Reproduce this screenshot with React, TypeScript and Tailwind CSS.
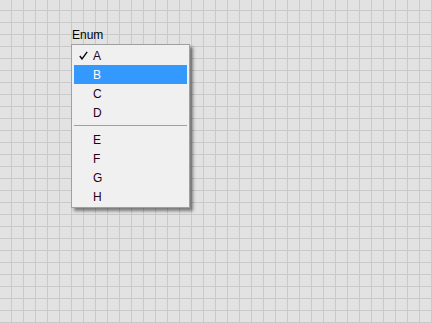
const items = ["A", "B", "C", "D", "E", "F", "G", "H"];

function Row({ label, checked, active }: { label: string; checked?: boolean; active?: boolean }) {
  return (
    <div className={`mx-[2px] flex h-[19px] items-center ${active ? "bg-[#3399ff] text-white" : "text-[#2a0012]"}`}>
      <span className="flex w-[19px] justify-end pr-[5px]">
        {checked && (
          <svg width="9" height="9" viewBox="0 0 9 9">
            <path d="M0.8 5 L3 8 L8.2 0.8" fill="none" stroke="#000" strokeWidth="1.3" />
          </svg>
        )}
      </span>
      <span>{label}</span>
    </div>
  );
}

export default function App() {
  return (
    <div
      className="h-[323px] w-[432px] overflow-hidden bg-[#e2e2e2] bg-[image:linear-gradient(to_right,#c9c9c9_1px,transparent_1px),linear-gradient(to_bottom,#c9c9c9_1px,transparent_1px)] bg-[size:12px_12px] bg-[position:11px_10px] pl-[71px] pt-[29px] text-[12px] leading-none"
      style={{ fontFamily: '"Liberation Sans", Arial, sans-serif' }}
    >
      <div className="pl-[1px] text-black">Enum</div>
      <div className="mt-[3px] w-[119px] border border-[#a0a0a0] bg-[#f0f0f0] py-[1px] shadow-[3px_3px_3px_rgba(0,0,0,0.45)]">
        {items.slice(0, 4).map((l, i) => (
          <Row key={l} label={l} checked={i === 0} active={i === 1} />
        ))}
        <div className="mx-[2px] h-[8px] pt-[3px]">
          <div className="h-px w-full bg-[#a0a0a0]" />
        </div>
        {items.slice(4).map((l) => (
          <Row key={l} label={l} />
        ))}
      </div>
    </div>
  );
}
